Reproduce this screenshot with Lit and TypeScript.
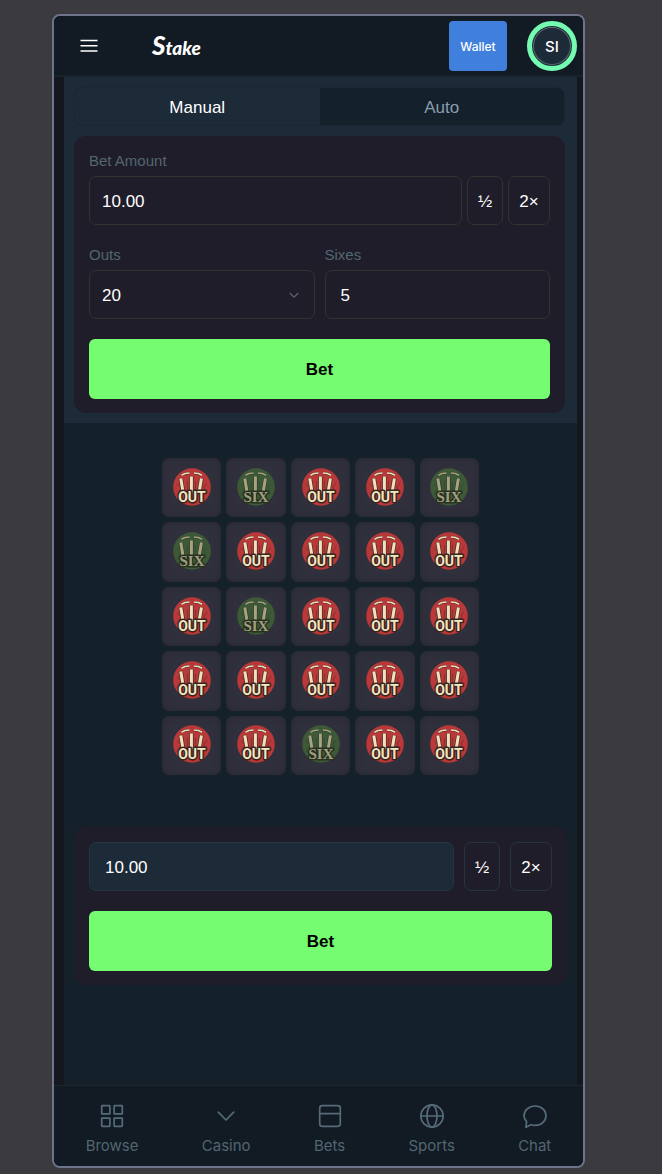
import { LitElement, html, css, svg } from "lit";
import { customElement, property, state } from "lit/decorators.js";
import { classMap } from "lit/directives/class-map.js";

type Outcome = "out" | "six";

const BOARD: Outcome[] = [
  "out", "six", "out", "out", "six",
  "six", "out", "out", "out", "out",
  "out", "six", "out", "out", "out",
  "out", "out", "out", "out", "out",
  "out", "out", "six", "out", "out",
];

const NAV = [
  {
    label: "Browse",
    icon: svg`<rect x="1.7" y="1.7" width="8.2" height="8.2" rx="0.5"/><rect x="14.100" y="1.7" width="8.2" height="8.2" rx="0.5"/><rect x="1.7" y="14.100" width="8.2" height="8.2" rx="0.5"/><rect x="14.100" y="14.100" width="8.2" height="8.2" rx="0.5"/>`,
  },
  { label: "Casino", icon: svg`<path d="M4.3 8.2 12 16l7.7-7.8"/>` },
  {
    label: "Bets",
    icon: svg`<rect x="1.7" y="1.7" width="20.6" height="20.6" rx="2.6"/><path d="M1.7 9.6h20.6"/>`,
  },
  {
    label: "Sports",
    icon: svg`<circle cx="12" cy="12" r="11.2"/><ellipse cx="12" cy="12" rx="5" ry="11.2"/><path d="M.8 12h22.400"/>`,
  },
  {
    label: "Chat",
    icon: svg`<path d="M2.9 23.2 3.6 17.6C2 15.9 1 14 1 11.8 1 6.2 5.8 2 12.2 2 18.500 2 23 6.200 23 11.600c0 5.600-4.700 9.800-10.800 9.800-1.500 0-2.900-.2-4.200-.7Z"/>`,
  },
];

@customElement("outcome-token")
class OutcomeToken extends LitElement {
  @property() kind: Outcome = "out";

  static styles = css`
    :host {
      display: flex;
      align-items: center;
      justify-content: center;
      aspect-ratio: 1;
      padding-bottom: 2px;
      box-sizing: border-box;
      border-radius: 7px;
      background: #302f3c;
      box-shadow: inset 0 0 6px #272733;
    }
    svg {
      width: 38px;
      height: 38px;
      overflow: visible;
    }
    text {
      font-weight: 700;
      font-size: 14px;
      text-anchor: middle;
      paint-order: stroke;
      stroke-width: 3px;
      stroke-linejoin: round;
      fill: #f1e6c2;
      stroke: #3a2420;
      font-family: Roboto, sans-serif;
    }
    .disc { fill: #b93838; }
    .shade { stroke: #4a2a26; fill: none; }
    .wood { stroke: #ede2bd; fill: none; }
    .six .disc { fill: #3d5937; }
    .six .shade { stroke: #2a3d25; }
    .six .wood { stroke: #a8a283; }
    .six text {
      fill: #a49e80;
      stroke: #26321f;
      font-size: 15px;
      font-family: "Liberation Serif", serif;
    }
  `;

  render() {
    const stumps = "M7.800 10.500 10.200 25M18.400 8.500v16M28.400 10.500 26 25";
    const bails = "M8.500 7.200 12 5.600 16.500 5M21 5 25.500 5.600 29 7.200";
    return html`
      <svg class=${this.kind} viewBox="0 0 38 38" role="img" aria-label=${this.kind}>
        <circle class="disc" cx="19" cy="19" r="18.800" />
        <path class="shade" d="M4 27 8 20l-4-4M33 26l-2-7 3-4M14.500 24V13M22.500 24V13" stroke-width="1" opacity=".5" />
        <path class="shade" d=${stumps} stroke-width="4.400" />
        <path class="shade" d=${bails} stroke-width="2.400" />
        <path class="wood" d=${stumps} stroke-width="3" />
        <path class="wood" d=${bails} stroke-width="1.500" />
        <text x="19" y="34">${this.kind.toUpperCase()}</text>
      </svg>
    `;
  }
}

@customElement("app-root")
class AppRoot extends LitElement {
  @state() mode: "Manual" | "Auto" = "Manual";

  static styles = css`
    :host {
      display: flex;
      flex-direction: column;
      box-sizing: border-box;
      min-height: 100vh;
      padding: 14px 77px 6px 52px;
      background: #3b3b3f;
      font-family: "Liberation Sans", Arial, sans-serif;
      font-size: 17px;
      color: #fff;
    }
    * { box-sizing: border-box; }
    button, input, select {
      font: inherit;
      color: inherit;
      margin: 0;
      padding: 0;
      background: none;
      border: 0;
      border-radius: 0;
    }
    .device {
      flex: 1;
      display: flex;
      flex-direction: column;
      border: 2px solid #6e758a;
      border-radius: 8px;
      background: #15171f;
      overflow: hidden;
    }
    header {
      display: flex;
      align-items: center;
      padding: 5px 6px 4px 25px;
      border-bottom: 2px solid #18222d;
      background: #121a23;
    }
    .menu { display: flex; }
    .menu svg { width: 20px; height: 20px; stroke: #fff; stroke-width: 1.500; }
    .logo {
      margin-left: 53px;
      font: italic 900 19px/30px Lato, sans-serif;
      color: #fff;
      text-decoration: none;
    }
    .logo .initial { font-size: 26px; }
    .account {
      display: flex;
      align-items: center;
      gap: 20px;
      margin-left: auto;
      font-family: Inter, sans-serif;
      font-weight: 500;
    }
    .wallet {
      width: 58px;
      height: 50px;
      border-radius: 4px;
      background: #4080dc;
      font-size: 12px;
    }
    .avatar {
      width: 50px;
      height: 50px;
      border: 5px solid #75fbb1;
      border-radius: 50%;
      background: #1d2a38;
      box-shadow: inset 0 0 0 1px #1d2a38, inset 0 0 0 2px #55706f;
      font-size: 15px;
    }
    main {
      flex: 1;
      display: flex;
      padding: 0 6px 0 10px;
    }
    .stage { flex: 1; background: #14212b; }
    .panel { padding: 10px 12px 10px 10px; background: #1d2a38; }
    .tabs {
      display: grid;
      grid-template-columns: 1fr 1fr;
      height: 39px;
      margin-bottom: 10px;
      border: 1px solid #1b2733;
      border-radius: 8px;
      overflow: hidden;
    }
    .tab, .box, .bet { padding-top: 2px; }
    .tab { background: #14212b; color: #8c9bb0; }
    .tab.active { background: #1d2a38; color: #fff; }
    .card {
      display: grid;
      gap: 20px;
      padding: 15px 15px 14px;
      border-radius: 12px;
      background: #1e1d29;
    }
    .field label {
      display: block;
      margin-bottom: 5px;
      font-size: 15px;
      line-height: 20px;
      color: #546670;
    }
    .amount { display: flex; gap: 5px; }
    .box {
      height: 49px;
      border: 1px solid #31332f;
      border-radius: 7px;
    }
    input.box, select.box { width: 100%; min-width: 0; padding: 2px 12px 0; outline: 0; }
    .amount .box { flex: none; }
    .amount input.box { flex: 1; width: 0; }
    .half { width: 36px; }
    .double { width: 42px; }
    .pair { display: grid; grid-template-columns: 1fr 1fr; gap: 10px; }
    .pick { display: grid; align-items: center; }
    .pick select, .pick svg { grid-area: 1 / 1; }
    .pick select { appearance: none; }
    .pick svg {
      justify-self: end;
      width: 10px;
      height: 10px;
      margin-right: 16px;
      fill: none;
      stroke: #5d6270;
      stroke-width: 1.300;
      pointer-events: none;
    }
    input.box.roomy { padding: 2px 15px 0; }
    .bet {
      height: 60px;
      border-radius: 6px;
      background: #75fc70;
      color: #000;
      font-weight: 700;
    }
    .board {
      display: grid;
      grid-template-columns: repeat(5, 1fr);
      gap: 5px;
      max-width: 317px;
      margin: 35px auto 52px;
    }
    .quick { margin: 0 10px; }
    .quick .amount { gap: 10px; }
    .quick .box { border-color: #253440; }
    .quick input.box { background: #1d2a38; }
    nav {
      display: flex;
      justify-content: space-around;
      padding: 18px 0 10px;
      border-top: 1px solid #192731;
      background: #121a23;
    }
    nav a {
      display: flex;
      flex-direction: column;
      align-items: center;
      gap: 8px;
      color: #516671;
      font: 15px/20px Inter, sans-serif;
      text-decoration: none;
    }
    nav svg {
      width: 24px;
      height: 24px;
      fill: none;
      stroke: #566b78;
      stroke-width: 1.700;
      stroke-linejoin: round;
      stroke-linecap: round;
    }
  `;

  private renderTab(name: "Manual" | "Auto") {
    return html`<button
      class=${classMap({ tab: true, active: this.mode === name })}
      role="tab"
      aria-selected=${this.mode === name}
      @click=${() => (this.mode = name)}
    >${name}</button>`;
  }

  render() {
    return html`
      <div class="device">
        <header>
          <button class="menu" aria-label="Menu">
            <svg viewBox="0 0 20 20"><path d="M1.500 4.500h17M1.500 9.700h17M1.500 15h17" /></svg>
          </button>
          <a class="logo" href="#"><span class="initial">S</span>take</a>
          <div class="account">
            <button class="wallet">Wallet</button>
            <button class="avatar">SI</button>
          </div>
        </header>
        <main>
          <div class="stage">
            <section class="panel">
              <div class="tabs" role="tablist">${this.renderTab("Manual")}${this.renderTab("Auto")}</div>
              <div class="card">
                <div class="field">
                  <label for="amount">Bet Amount</label>
                  <div class="amount">
                    <input class="box" id="amount" inputmode="decimal" value="10.00" />
                    <button class="box half">½</button>
                    <button class="box double">2×</button>
                  </div>
                </div>
                <div class="pair">
                  <div class="field">
                    <label for="outs">Outs</label>
                    <div class="pick">
                      <select class="box" id="outs"><option>20</option></select>
                      <svg viewBox="0 0 10 10"><path d="M.8 3 5 7.200 9.200 3" /></svg>
                    </div>
                  </div>
                  <div class="field">
                    <label for="sixes">Sixes</label>
                    <input class="box roomy" id="sixes" value="5" />
                  </div>
                </div>
                <button class="bet">Bet</button>
              </div>
            </section>
            <section class="board">
              ${BOARD.map((kind) => html`<outcome-token .kind=${kind}></outcome-token>`)}
            </section>
            <section class="card quick">
              <div class="amount">
                <input class="box roomy" aria-label="Bet Amount" inputmode="decimal" value="10.00" />
                <button class="box half">½</button>
                <button class="box double">2×</button>
              </div>
              <button class="bet">Bet</button>
            </section>
          </div>
        </main>
        <nav>
          ${NAV.map(
            ({ label, icon }) => html`<a href="#"><svg viewBox="0 0 24 24">${icon}</svg>${label}</a>`
          )}
        </nav>
      </div>
    `;
  }
}
